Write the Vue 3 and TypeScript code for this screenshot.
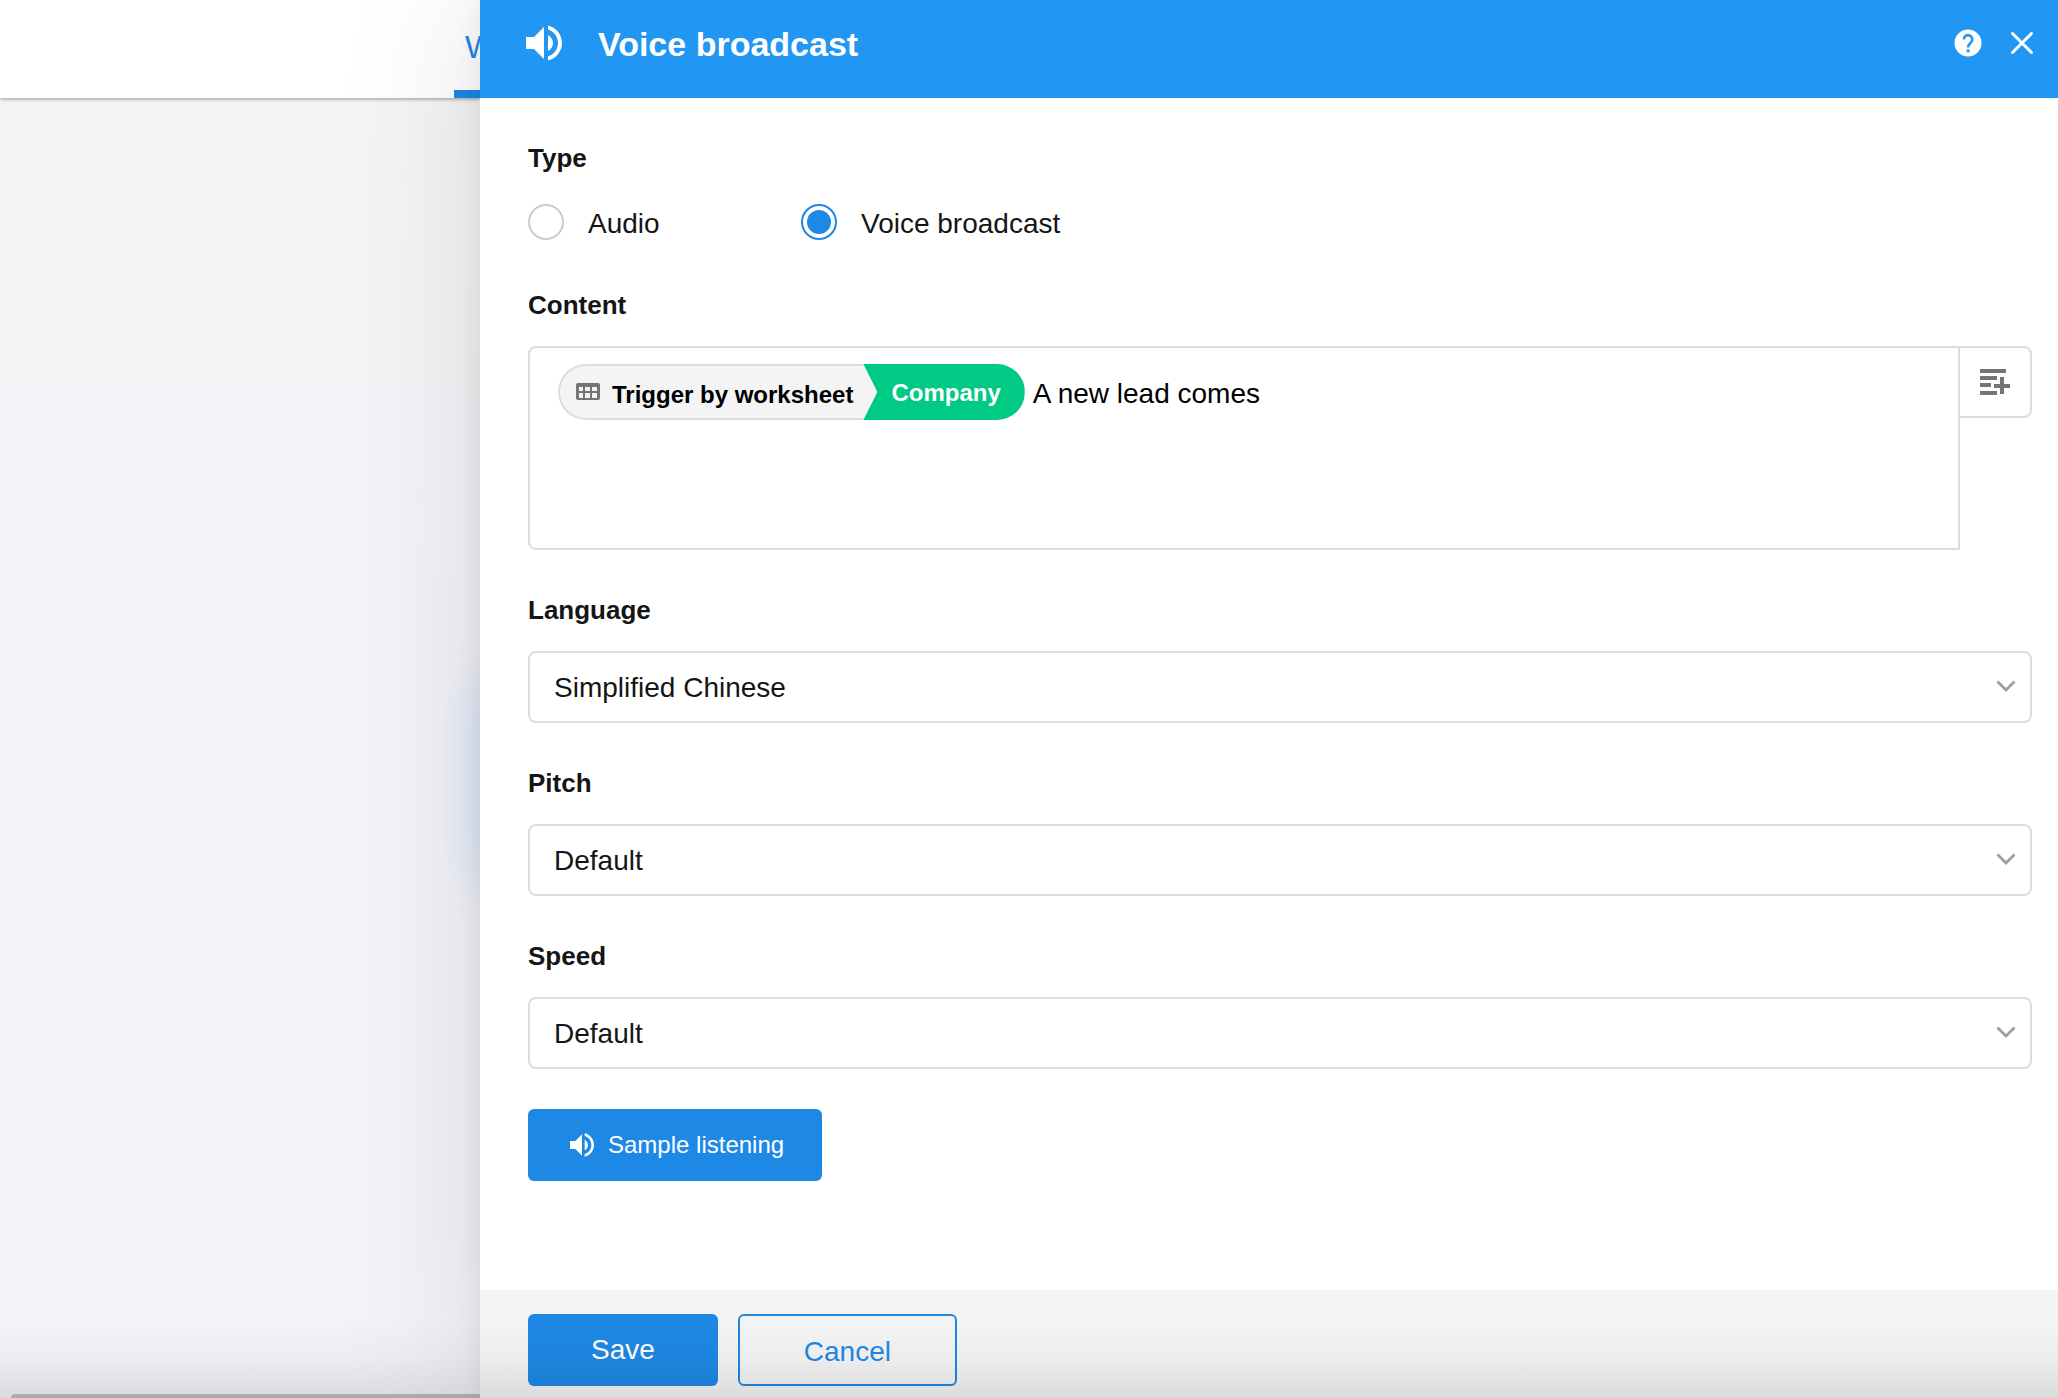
<script setup lang="ts">
import { ref } from 'vue'

interface SelectField {
  id: string
  label: string
  options: string[]
}

const broadcastType = ref<'audio' | 'voice'>('voice')
const message = ref('A new lead comes')

const selectFields: SelectField[] = [
  { id: 'language', label: 'Language', options: ['Simplified Chinese'] },
  { id: 'pitch', label: 'Pitch', options: ['Default'] },
  { id: 'speed', label: 'Speed', options: ['Default'] },
]
</script>

<template>
  <div class="page">
    <aside class="backdrop">
      <nav class="tabs">
        <a class="tab" href="#">W</a>
      </nav>
      <div class="canvas">
        <div class="node-glow"></div>
        <div class="scrollbar"></div>
      </div>
    </aside>

    <main class="drawer">
      <header class="drawer-head">
        <svg class="head-icon" viewBox="0 0 24 24" aria-hidden="true">
          <path d="M3 9v6h4l5 5V4L7 9H3zm13.500 3c0-1.770-1.020-3.290-2.500-4.030v8.050c1.480-.730 2.500-2.250 2.500-4.020zM14 3.230v2.060c2.890.860 5 3.540 5 6.710s-2.110 5.850-5 6.710v2.060c4.010-.910 7-4.490 7-8.770s-2.990-7.860-7-8.770z" />
        </svg>
        <h1>Voice broadcast</h1>
        <button class="icon-button" type="button" aria-label="Help">
          <svg viewBox="0 0 32 32" aria-hidden="true">
            <circle cx="16" cy="16" r="13.500" fill="#fff" />
            <path d="M11.900 12.400a4.200 4.200 0 1 1 7.300 2.800c-1.600 1.700-3.100 2.400-3.100 5.200" fill="none" stroke="#2196f3" stroke-width="2.600" />
            <rect x="14.700" y="22.400" width="2.900" height="2.900" fill="#2196f3" />
          </svg>
        </button>
        <button class="icon-button" type="button" aria-label="Close">
          <svg viewBox="0 0 32 32" aria-hidden="true">
            <path d="M6.500 6.500l19 19M25.500 6.500l-19 19" fill="none" stroke="#fff" stroke-width="3" stroke-linecap="round" />
          </svg>
        </button>
      </header>

      <form class="drawer-body" @submit.prevent>
        <fieldset class="field">
          <legend class="field-label">Type</legend>
          <div class="radio-row">
            <label class="radio">
              <input v-model="broadcastType" type="radio" name="type" value="audio" />
              <span>Audio</span>
            </label>
            <label class="radio">
              <input v-model="broadcastType" type="radio" name="type" value="voice" />
              <span>Voice broadcast</span>
            </label>
          </div>
        </fieldset>

        <div class="field">
          <label class="field-label" for="content">Content</label>
          <div class="content-row">
            <div class="editor">
              <span class="chip">
                <span class="chip-source">
                  <svg viewBox="0 0 24 18" aria-hidden="true">
                    <path fill-rule="evenodd" d="M2 0h20a2 2 0 0 1 2 2v13a2 2 0 0 1-2 2H2a2 2 0 0 1-2-2V2a2 2 0 0 1 2-2zM3 4v4h4V4zM9 4v4h5V4zM16 4v4h5V4zM3 10v5h4v-5zM9 10v5h5v-5zM16 10v5h5v-5z" />
                  </svg>
                  <span>Trigger by worksheet</span>
                </span>
                <span class="chip-value">Company</span>
              </span>
              <textarea id="content" v-model="message" rows="1" spellcheck="false"></textarea>
            </div>
            <button class="insert" type="button" aria-label="Insert field">
              <svg viewBox="0 0 30 26" aria-hidden="true">
                <path d="M0 0h26v4H0zM0 7h17v4H0zM0 14h11v4H0zM0 22h17v4H0zM20 8h4v7h6v4h-6v6h-4v-6h-6v-4h6z" />
              </svg>
            </button>
          </div>
        </div>

        <div v-for="field in selectFields" :key="field.id" class="field">
          <label class="field-label" :for="field.id">{{ field.label }}</label>
          <div class="select">
            <select :id="field.id">
              <option v-for="option in field.options" :key="option">{{ option }}</option>
            </select>
            <svg viewBox="0 0 20 12" aria-hidden="true">
              <path d="M1.500 1.500l8.500 8.500l8.500-8.500" fill="none" stroke="#9e9e9e" stroke-width="2.800" />
            </svg>
          </div>
        </div>

        <button class="button primary listen" type="button">
          <svg viewBox="0 0 24 24" aria-hidden="true">
            <path d="M3 9v6h4l5 5V4L7 9H3zm13.500 3c0-1.770-1.020-3.290-2.500-4.030v8.050c1.480-.730 2.500-2.250 2.500-4.020zM14 3.230v2.060c2.890.860 5 3.540 5 6.710s-2.110 5.850-5 6.710v2.060c4.010-.910 7-4.490 7-8.770s-2.990-7.860-7-8.770z" />
          </svg>
          <span>Sample listening</span>
        </button>
      </form>

      <footer class="drawer-foot">
        <button class="button primary save" type="button">Save</button>
        <button class="button outline" type="button">Cancel</button>
      </footer>
    </main>
    <div class="page-shade"></div>
  </div>
</template>

<style>
body {
  margin: 0;
}
</style>

<style scoped>
.page,
.page * {
  box-sizing: border-box;
}

.page {
  position: relative;
  display: grid;
  grid-template-columns: 480px minmax(0, 1fr);
  min-height: 100vh;
  overflow: hidden;
  font-family: "Helvetica Neue", "Liberation Sans", Arial, sans-serif;
  color: #151515;
}

button,
select,
textarea {
  margin: 0;
  font: inherit;
}

button {
  padding: 0;
  border: 0;
  background: none;
  cursor: pointer;
}

svg {
  display: block;
  flex: none;
}

.backdrop {
  display: flex;
  flex-direction: column;
  min-width: 0;
  overflow: hidden;
}

.tabs {
  position: relative;
  z-index: 1;
  display: flex;
  justify-content: flex-end;
  height: 98px;
  background: #fff;
  box-shadow: 0 1px 4px rgba(0, 0, 0, 0.4);
}

.tab {
  width: 26px;
  padding: 28px 0 0 11px;
  border-bottom: 8px solid #1e88e5;
  font-size: 32px;
  line-height: 38px;
  color: #1e88e5;
  text-decoration: none;
}

.canvas {
  position: relative;
  flex: 1;
  background: linear-gradient(#f5f5f5, #f4f3f9 500px);
}

.node-glow {
  position: absolute;
  top: 576px;
  left: 100%;
  width: 100px;
  height: 212px;
  border-radius: 24px;
  box-shadow: 0 0 48px rgba(33, 150, 243, 0.18);
}

.scrollbar {
  position: absolute;
  right: 0;
  bottom: 0;
  left: 11px;
  height: 4px;
  border-top-left-radius: 4px;
  background: #c0c0c0;
}

.drawer {
  position: relative;
  z-index: 2;
  display: flex;
  flex-direction: column;
  background: #fff;
  box-shadow: 0 0 140px rgba(0, 0, 0, 0.12), 0 0 24px rgba(0, 0, 0, 0.07);
}

.drawer-head {
  display: flex;
  align-items: center;
  height: 98px;
  padding: 0 20px 12px 40px;
  background: #2196f3;
  color: #fff;
}

.head-icon {
  width: 48px;
  height: 48px;
  fill: #fff;
}

.drawer-head h1 {
  flex: 1;
  margin: 0 0 0 30px;
  padding-top: 2px;
  font-size: 34px;
  line-height: 40px;
  font-weight: 700;
}

.icon-button svg {
  width: 32px;
  height: 32px;
}

.icon-button + .icon-button {
  margin-left: 22px;
}

.drawer-body {
  flex: 1;
  padding: 45px 26px 45px 48px;
}

.field {
  min-width: 0;
  margin: 0;
  padding: 0;
  border: 0;
}

.field + .field {
  margin-top: 45px;
}

.field-label {
  display: block;
  margin-bottom: 26px;
  padding: 0;
  font-size: 26px;
  line-height: 30px;
  font-weight: 700;
}

.radio-row {
  display: flex;
  height: 46px;
}

.radio {
  display: flex;
  align-items: center;
  gap: 24px;
  min-width: 273px;
  font-size: 28px;
  line-height: 36px;
}

.radio span {
  padding-top: 4px;
}

.radio input {
  width: 36px;
  height: 36px;
  margin: 0;
  padding: 4px;
  border: 2px solid #ccc;
  border-radius: 50%;
  appearance: none;
}

.radio input:checked {
  border-color: #1e88e5;
  background: #1e88e5 content-box;
}

.content-row {
  display: flex;
  align-items: flex-start;
}

.editor {
  display: flex;
  flex: 1;
  align-items: flex-start;
  gap: 8px;
  min-width: 0;
  height: 204px;
  padding: 16px 28px;
  border: 2px solid #ddd;
  border-radius: 8px 0 0 8px;
}

.chip {
  display: flex;
  flex: none;
  height: 56px;
  font-size: 24px;
  line-height: 52px;
  font-weight: 700;
}

.chip-source {
  display: flex;
  align-items: center;
  gap: 12px;
  padding: 0 24px 0 16px;
  border: 2px solid #ddd;
  border-right: 0;
  border-radius: 28px 0 0 28px;
  background: #f4f4f4;
  color: #000;
}

.chip-source span {
  padding-top: 5px;
}

.chip-source svg {
  width: 24px;
  height: 18px;
  fill: #757575;
}

.chip-value {
  margin-left: -14px;
  padding: 3px 24px 0 28px;
  border-radius: 0 28px 28px 0;
  background: #00ca83;
  color: #fff;
  clip-path: polygon(0 0, 100% 0, 100% 100%, 0 100%, 14px 50%);
}

.editor textarea {
  flex: 1;
  min-width: 0;
  height: 60px;
  padding: 0;
  border: 0;
  outline: 0;
  background: none;
  font-size: 28px;
  line-height: 60px;
  color: #000;
  resize: none;
  overflow: hidden;
}

.insert {
  display: flex;
  width: 72px;
  height: 72px;
  padding: 21px 20px;
  border: 2px solid #ddd;
  border-left: 0;
  border-radius: 0 8px 8px 0;
}

.insert svg {
  width: 30px;
  height: 26px;
  fill: #757575;
}

.select {
  position: relative;
}

.select select {
  display: block;
  width: 100%;
  height: 72px;
  padding: 0 60px 0 24px;
  border: 2px solid #ddd;
  border-radius: 8px;
  background: #fff;
  font-size: 28px;
  color: #151515;
  appearance: none;
}

.select svg {
  position: absolute;
  top: 29px;
  right: 16px;
  width: 20px;
  height: 12px;
  pointer-events: none;
}

.button {
  height: 72px;
  border-radius: 6px;
  font-size: 28px;
  line-height: 36px;
}

.primary {
  background: #1e88e5;
  color: #fff;
}

.listen {
  display: flex;
  align-items: center;
  gap: 10px;
  margin-top: 40px;
  padding: 0 38px;
  font-size: 24px;
}

.listen svg {
  width: 32px;
  height: 32px;
  fill: #fff;
}

.drawer-foot {
  display: flex;
  gap: 20px;
  padding: 24px 48px 12px;
  background: #f4f4f4;
}

.save {
  padding: 0 63px;
}

.outline {
  padding: 4px 64px 0;
  border: 2px solid #1e88e5;
  color: #1e88e5;
}

.page-shade {
  position: absolute;
  z-index: 3;
  right: 0;
  bottom: 0;
  left: 0;
  height: 80px;
  background: linear-gradient(rgba(0, 0, 0, 0), rgba(0, 0, 0, 0.03) 50%, rgba(0, 0, 0, 0.1));
  pointer-events: none;
}
</style>
